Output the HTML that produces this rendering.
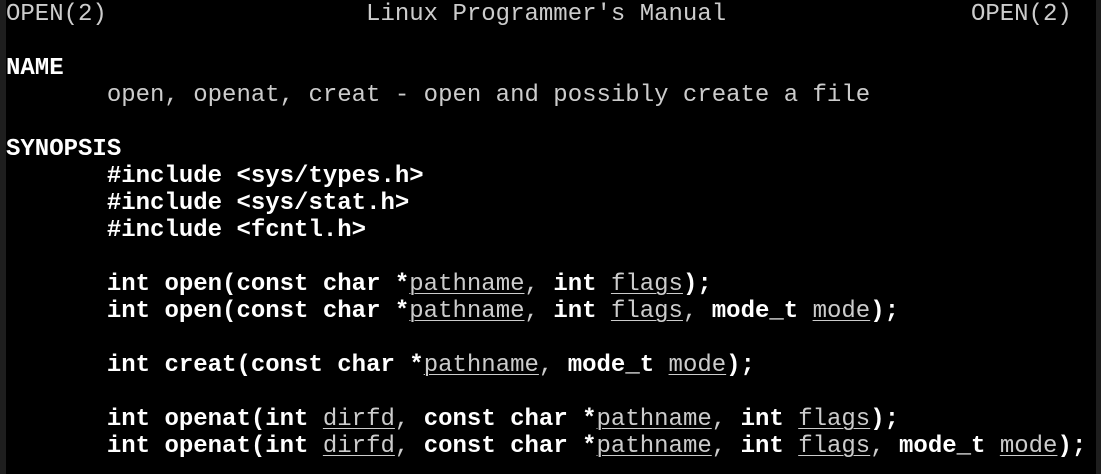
<!DOCTYPE html>
<html><head><meta charset="utf-8"><style>
html,body{margin:0;padding:0;width:1101px;height:474px;overflow:hidden;background:#000}
#l{position:absolute;left:0;top:0;width:6px;height:474px;background:#1e1e1e}
#r{position:absolute;right:0;top:0;width:5px;height:474px;background:#1e1e1e}
pre{position:absolute;left:6px;top:1px;margin:0;font-family:"Liberation Mono",monospace;font-size:24px;line-height:27px;color:#cccccc;letter-spacing:0}
b{color:#fff;font-weight:bold}
u{text-decoration:underline;text-underline-offset:3px;text-decoration-thickness:1px}
</style></head><body><div id="l"></div><div id="r"></div>
<pre>OPEN(2)                  Linux Programmer's Manual                 OPEN(2)

<b>NAME</b>
       open, openat, creat - open and possibly create a file

<b>SYNOPSIS</b>
       <b>#include &lt;sys/types.h&gt;</b>
       <b>#include &lt;sys/stat.h&gt;</b>
       <b>#include &lt;fcntl.h&gt;</b>

       <b>int open(const char *</b><u>pathname</u>, <b>int</b> <u>flags</u><b>);</b>
       <b>int open(const char *</b><u>pathname</u>, <b>int</b> <u>flags</u>, <b>mode_t</b> <u>mode</u><b>);</b>

       <b>int creat(const char *</b><u>pathname</u>, <b>mode_t</b> <u>mode</u><b>);</b>

       <b>int openat(int</b> <u>dirfd</u>, <b>const char *</b><u>pathname</u>, <b>int</b> <u>flags</u><b>);</b>
       <b>int openat(int</b> <u>dirfd</u>, <b>const char *</b><u>pathname</u>, <b>int</b> <u>flags</u>, <b>mode_t</b> <u>mode</u><b>);</b>
</pre></body></html>
